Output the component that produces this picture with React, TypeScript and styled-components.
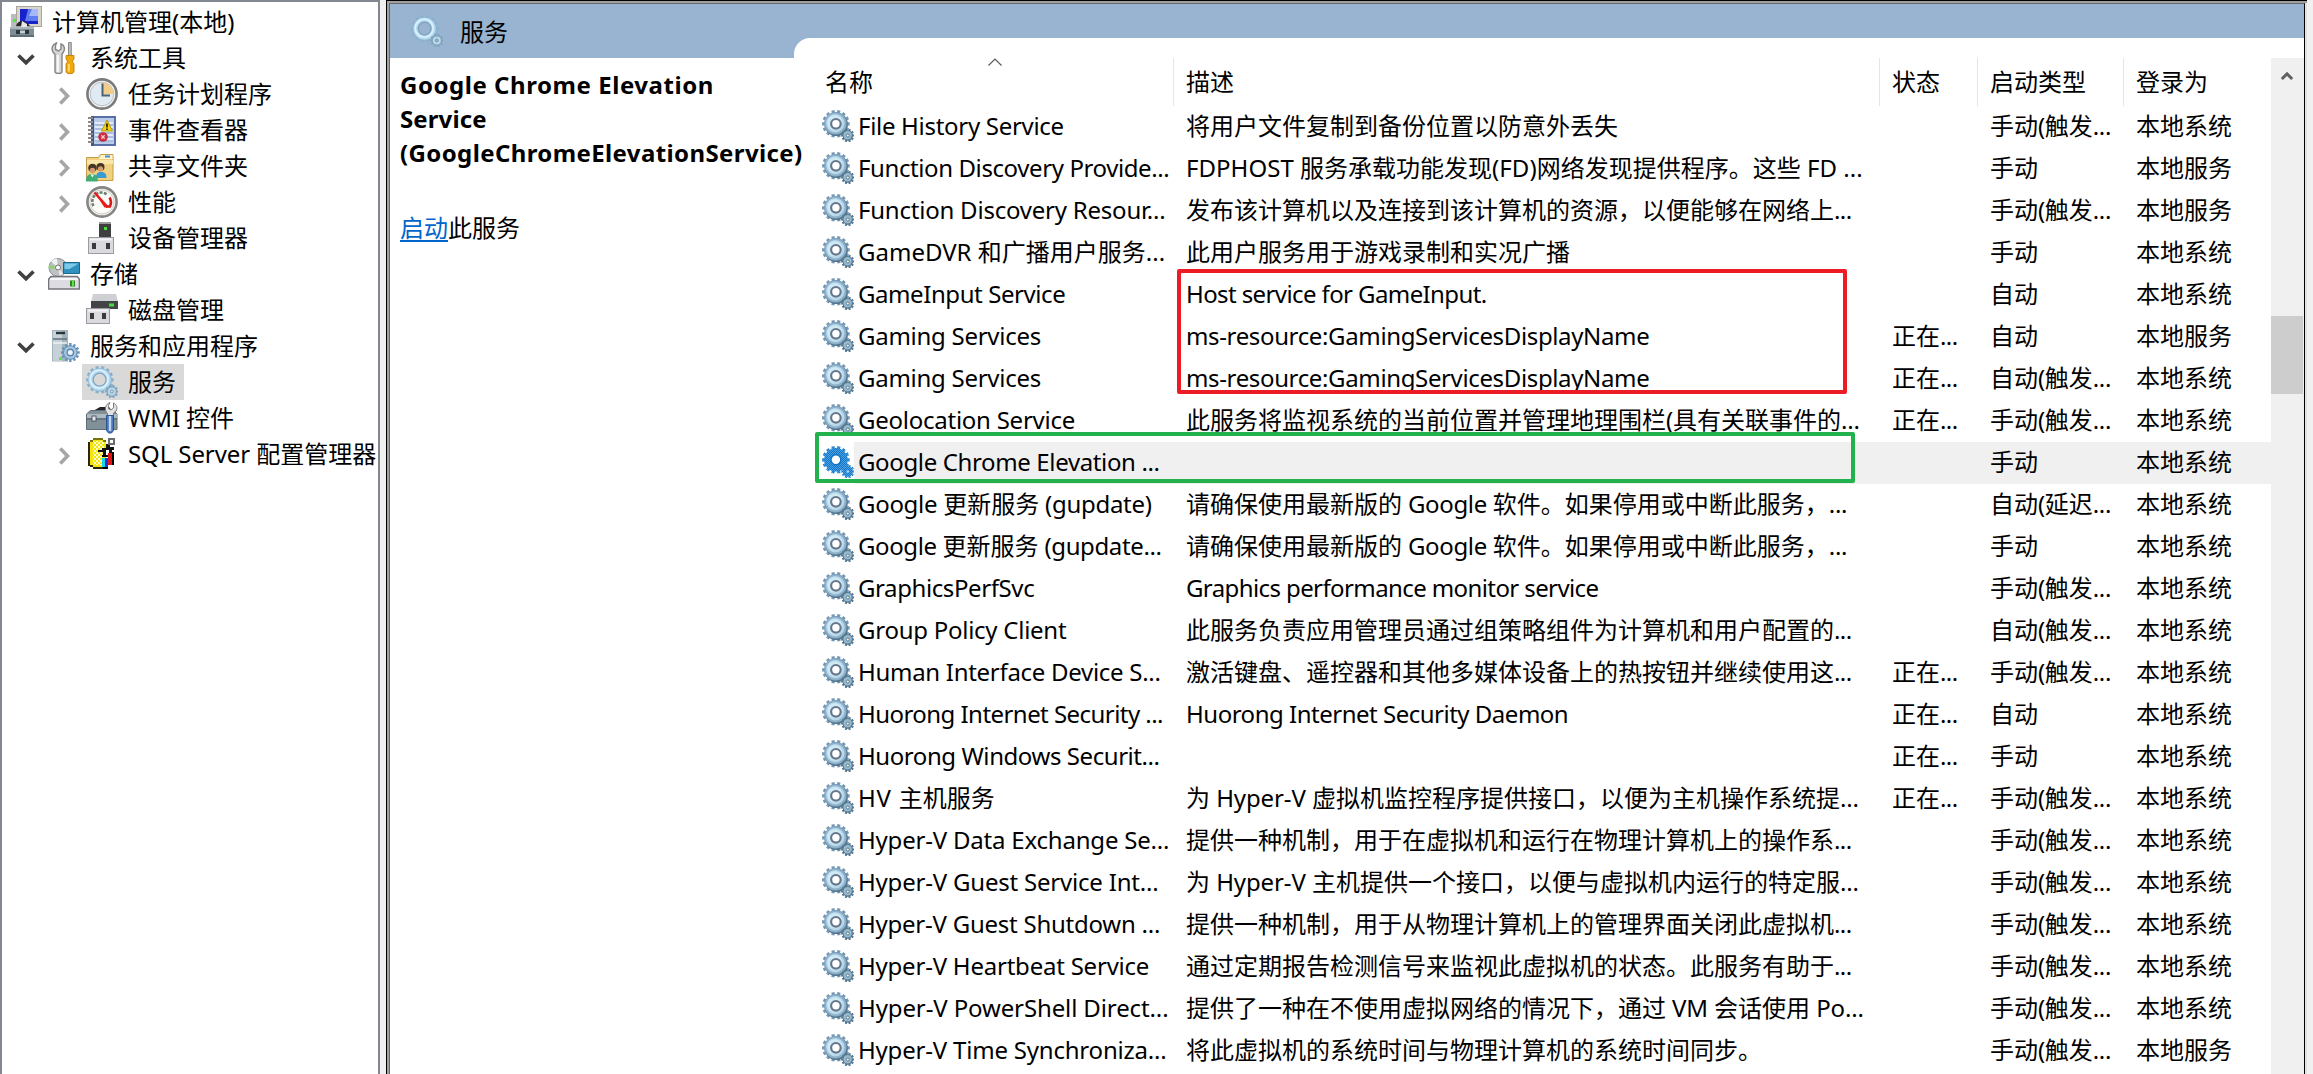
import React from "react";
import styled, { createGlobalStyle } from "styled-components";

const GlobalStyle = createGlobalStyle`
  * { box-sizing: border-box; }
  html, body { margin: 0; padding: 0; }
  body {
    width: 2313px;
    height: 1074px;
    overflow: hidden;
    background: #f0f0f0;
    color: #000;
    font-family: "Noto Sans", "Noto Sans CJK SC", sans-serif;
    font-size: 24px;
  }
`;

/* ---------- shared text ---------- */

const Latin = styled.span<{ $track: number }>`
  letter-spacing: ${(p) => p.$track}px;
`;

/** Tracks Latin runs separately so that Chinese glyphs keep their full-width pitch. */
function Label({ text, track = -0.6 }: { text: string; track?: number }) {
  const parts = text.split(/([\x20-\x7e]+)/).filter(Boolean);
  return (
    <>
      {parts.map((p, i) =>
        /^[\x20-\x7e]/.test(p) ? (
          <Latin key={i} $track={track}>
            {p}
          </Latin>
        ) : (
          <React.Fragment key={i}>{p}</React.Fragment>
        )
      )}
    </>
  );
}

/* ---------- icons ---------- */

const Glyph = styled.svg`
  display: block;
  width: 32px;
  height: 32px;
  flex: none;
`;

function gearPath(cx: number, cy: number, outer: number, inner: number, teeth: number) {
  const pts: string[] = [];
  const step = (Math.PI * 2) / teeth;
  for (let i = 0; i < teeth; i++) {
    const a = i * step;
    const spots: [number, number][] = [
      [a - step * 0.3, inner],
      [a - step * 0.26, outer],
      [a + step * 0.26, outer],
      [a + step * 0.3, inner],
    ];
    for (const [ang, r] of spots) {
      pts.push(`${(cx + Math.cos(ang) * r).toFixed(2)} ${(cy + Math.sin(ang) * r).toFixed(2)}`);
    }
  }
  return `M${pts.join("L")}Z`;
}

const BIG_GEAR = gearPath(13.9, 13.8, 13.9, 11.8, 14);
const SMALL_GEAR = gearPath(25.8, 25.5, 6.8, 5.2, 10);

function ListGear({ selected = false }: { selected?: boolean }) {
  if (selected) {
    return (
      <Glyph viewBox="0 0 32 32">
        <defs>
          <pattern id="dither" width="2" height="2" patternUnits="userSpaceOnUse">
            <rect width="2" height="2" fill="#1478cc" />
            <rect width="1" height="1" fill="#4a9edb" />
            <rect x="1" y="1" width="1" height="1" fill="#4a9edb" />
          </pattern>
        </defs>
        <path d={BIG_GEAR} fill="url(#dither)" />
        <path d={SMALL_GEAR} fill="url(#dither)" />
        <circle cx="13.9" cy="13.8" r="5" fill="none" stroke="#1173c6" strokeWidth="1.4" />
        <circle cx="13.9" cy="13.8" r="4.2" fill="#fff" />
        <circle cx="25.8" cy="25.5" r="1.2" fill="#b5d8f2" />
      </Glyph>
    );
  }
  return (
    <Glyph viewBox="0 0 32 32">
      <path d={BIG_GEAR} fill="#7698b4" />
      <circle cx="14.4" cy="14.6" r="11.4" fill="#55768f" />
      <circle cx="13.5" cy="13.4" r="11" fill="#8db1ca" />
      <circle cx="13.3" cy="13.2" r="9.2" fill="#b6d7e9" />
      <circle cx="12.9" cy="12.8" r="7.6" fill="#cfe9f5" />
      <circle cx="13.9" cy="13.8" r="4.8" fill="#fff" stroke="#65778e" strokeWidth="2.2" />
      <path d={SMALL_GEAR} fill="#54768f" />
      <circle cx="25.6" cy="25.3" r="4.2" fill="#98bace" />
      <circle cx="25.8" cy="25.5" r="1.5" fill="#eef6fa" stroke="#5d7b92" strokeWidth="1" />
    </Glyph>
  );
}

function PaleGear({ hole }: { hole: string }) {
  return (
    <Glyph viewBox="0 0 32 32">
      <path d={BIG_GEAR} fill="#8ab0cc" />
      <circle cx="13.6" cy="13.6" r="9" fill={hole} stroke="#b4daf0" strokeWidth="4.4" />
      <circle cx="13.2" cy="13.2" r="9" fill="none" stroke="#dcf2fc" strokeWidth="1.6" />
      <circle cx="13.6" cy="13.6" r="6.4" fill={hole} stroke="#7fa0ba" strokeWidth="1.200" />
      <path d={SMALL_GEAR} fill="#7fa3bd" />
      <circle cx="25.8" cy="25.5" r="4" fill="#bad8e8" />
      <circle cx="25.8" cy="25.5" r="1.5" fill={hole} stroke="#7595ad" strokeWidth="0.9" />
    </Glyph>
  );
}

const ComputerIcon = () => (
  <Glyph viewBox="0 0 32 32">
    <rect x="6.5" y="0.5" width="25" height="20" fill="#d8d6cc" stroke="#a8a69c" />
    <rect x="10" y="3" width="18" height="15" fill="#1722c8" />
    <path d="M18 3h10v12H15z" fill="#5f7cf0" />
    <path d="M22 3h6v7h-9z" fill="#a5b8fa" />
    <path d="M1 8h5v13H1z" fill="#b9bdbd" />
    <rect x="3" y="13" width="3" height="3" fill="#4cf02c" />
    <path d="M6 20c2-6 9-7 14 0z" fill="#23272b" />
    <path d="M12 15l5 3v3h-6z" fill="#e8e8e8" />
    <rect x="0" y="21" width="24" height="10" fill="#7f8d94" />
    <rect x="0" y="21" width="24" height="2" fill="#a9b7bd" />
    <rect x="6" y="24" width="4" height="4" fill="#2c363b" />
    <rect x="15" y="24" width="4" height="4" fill="#2c363b" />
    <rect x="10" y="25" width="5" height="2" fill="#c5d0d4" />
    <rect x="0" y="29" width="24" height="2" fill="#5f6e76" />
  </Glyph>
);

const ToolsIcon = () => (
  <Glyph viewBox="0 0 32 32">
    <path
      d="M8.500 1L7.500 3.500v4l3 1.500 2.500-2V2c3 1 4.500 4.500 2.500 8L14 12v18l-1.500 1.500h-4L7 30V12.500L5 10C3 6.500 4.500 2 8.500 1z"
      fill="#d6d6d6"
      stroke="#858585"
      strokeWidth="1.400"
    />
    <path d="M9.800 13v17" stroke="#fafafa" strokeWidth="2" />
    <path d="M20.500 0.500h2.800v13h-2.800z" fill="#bdbdbd" stroke="#808080" strokeWidth="0.900" />
    <path d="M18 13.500h8v3l-1.500 3L26 22v8l-1.500 1.500h-5L18 30v-8l1.500-2.500L18 16.500z" fill="#f0a90c" stroke="#c07f08" strokeWidth="0.900" />
    <path d="M20.800 22v7.500" stroke="#ffd968" strokeWidth="2" />
  </Glyph>
);

const ClockIcon = () => (
  <Glyph viewBox="0 0 32 32">
    <circle cx="16" cy="16" r="14.600" fill="#f4f4f4" stroke="#7b7b7b" strokeWidth="2.600" />
    <circle cx="16" cy="16" r="11.800" fill="#dfeaf3" stroke="#b9bfc4" strokeWidth="1" />
    <path d="M16 16V4.500A11.500 11.500 0 0 1 27.500 16z" fill="#f2cd8a" />
    <path d="M16.500 5.500V17.500h7.500" fill="none" stroke="#4d6175" strokeWidth="2" />
  </Glyph>
);

const EventIcon = () => (
  <Glyph viewBox="0 0 32 32">
    <rect x="5" y="2" width="25" height="30" fill="#5a6fa8" />
    <rect x="8" y="4" width="20" height="26" fill="#b9cbea" />
    <path d="M9 9h18M9 13h18M9 17h18M9 21h18M9 25h18" stroke="#f2f6fc" strokeWidth="1.400" />
    <path d="M9 11h18M9 15h18M9 19h18M9 23h18M9 27h18" stroke="#8ea5cf" strokeWidth="0.700" />
    <rect x="5" y="2" width="3" height="30" fill="#4c5578" />
    <path d="M2 4h5M2 8h5M2 12h5M2 16h5M2 20h5M2 24h5M2 28h5" stroke="#8a8a8a" strokeWidth="2" />
    <path d="M21 6l5.500 11h-11z" fill="#f2d313" stroke="#b99b0c" strokeWidth="1" />
    <path d="M21 9.500v4M21 14.500v1.500" stroke="#2d2a10" strokeWidth="1.800" />
    <circle cx="17" cy="23" r="4.800" fill="#c92f3f" />
    <path d="M15.300 21.300l3.400 3.400M18.700 21.300l-3.400 3.400" stroke="#f6c7ca" strokeWidth="1.300" />
  </Glyph>
);

const SharedIcon = () => (
  <Glyph viewBox="0 0 32 32">
    <path d="M0.500 7.500h12l2-3h12.500v26H0.500z" fill="#f0d180" stroke="#c49c48" strokeWidth="1" />
    <path d="M15 5h11.500v4H13z" fill="#fff4cd" />
    <path d="M19 5.500h5v2h-5z" fill="#3d93d8" />
    <path d="M1 10h26v4H1z" fill="#fae6a8" />
    <circle cx="14.500" cy="17" r="4" fill="#43352a" />
    <circle cx="14.500" cy="19" r="2.700" fill="#d39c6c" />
    <path d="M10 28c0-4.500 1.500-6 5-6s5.500 1.500 5.500 6z" fill="#3a9ad2" />
    <circle cx="6.500" cy="18" r="4.300" fill="#43352a" />
    <circle cx="6.500" cy="20.500" r="2.800" fill="#d39c6c" />
    <path d="M0 31.500C0 26 2 24 6 24s5.800 2 5.800 7.500z" fill="#3fae74" />
    <path d="M4.500 24.500l1.800 3 1.700-3z" fill="#fff" />
  </Glyph>
);

const PerfIcon = () => (
  <Glyph viewBox="0 0 32 32">
    <circle cx="16" cy="16" r="14.600" fill="#f4f1ea" stroke="#858585" strokeWidth="2.600" />
    <circle cx="16" cy="16" r="12" fill="#fdfcf8" stroke="#d3cfc4" strokeWidth="1" />
    <path d="M7.500 20a9 9 0 0 1 14-11" fill="none" stroke="#6d8272" strokeWidth="2.600" strokeDasharray="3 1.200" />
    <path d="M23.500 11.500c2 3 1.500 6.500 0.500 9h-4" fill="none" stroke="#d91a1a" strokeWidth="2.600" />
    <path d="M8.500 6.500l13.500 15-3.500 0z" fill="#e81c1c" />
    <path d="M8.500 6.500l13 14.500" stroke="#e81c1c" strokeWidth="2.600" />
  </Glyph>
);

const DeviceIcon = () => (
  <Glyph viewBox="0 0 32 32">
    <rect x="13" y="0" width="12" height="16" fill="#3f3f3f" />
    <rect x="13" y="0" width="12" height="2" fill="#9a9a9a" />
    <rect x="18" y="5" width="3" height="3" fill="#43e03c" />
    <rect x="2.500" y="15.500" width="25" height="16" fill="#d9d9de" stroke="#9b9ba1" />
    <rect x="4" y="16.500" width="22" height="2" fill="#f3f3f5" />
    <rect x="6" y="21" width="4" height="6" fill="#3a3a3a" />
    <rect x="20" y="21" width="4" height="6" fill="#3a3a3a" />
  </Glyph>
);

const StorageIcon = () => (
  <Glyph viewBox="0 0 32 32">
    <circle cx="10" cy="9.500" r="9" fill="#bfc2c4" stroke="#8a8d8f" />
    <path d="M10 9.500L3 3.500a9 9 0 0 1 6-3z" fill="#f1f3f3" />
    <path d="M10 9.500L11.500 18a9 9 0 0 0 4-2z" fill="#e6e8e8" />
    <path d="M10 9.500L1 11.500a9 9 0 0 1 0.300-5z" fill="#93cf76" />
    <circle cx="10" cy="9.500" r="2.500" fill="#fff" stroke="#6f7274" />
    <path d="M15.500 4.500h16v11h-16z" fill="#3290be" stroke="#1d668e" />
    <path d="M16.500 5.500h14l-9 5.500h-5z" fill="#7ccbe9" />
    <path d="M3 18.500h26l2.500 3v9.500H0.500v-9.500z" fill="#dcdce2" stroke="#74747b" strokeWidth="1.600" />
    <path d="M2 21h28" stroke="#fff" strokeWidth="1.500" />
    <rect x="22" y="22.500" width="5" height="6" fill="#3a7e31" />
    <rect x="24" y="22.500" width="2" height="6" fill="#58ea3b" />
  </Glyph>
);

const DiskIcon = () => (
  <Glyph viewBox="0 0 32 32">
    <path d="M7 0h23l2 8H5z" fill="#cfd0d4" />
    <rect x="5" y="7" width="27" height="8" fill="#424446" />
    <rect x="23" y="9.500" width="5" height="3" fill="#43e03c" />
    <rect x="0.500" y="14.500" width="23" height="15" fill="#d9d9de" stroke="#9b9ba1" />
    <rect x="2" y="15.500" width="20" height="2" fill="#f3f3f5" />
    <rect x="4" y="19" width="4" height="6" fill="#3a3a3a" />
    <rect x="16" y="19" width="4" height="6" fill="#3a3a3a" />
  </Glyph>
);

const SERVER_GEAR = gearPath(22.3, 22.5, 9.5, 7.3, 12);
const ServerIcon = () => (
  <Glyph viewBox="0 0 32 32">
    <path d="M4 0h16v31.500H4z" fill="#a3b4bd" />
    <path d="M5 1h9v30H5z" fill="#c6d2d8" />
    <path d="M8 3h9" stroke="#27333b" strokeWidth="2.400" />
    <path d="M5 9h14" stroke="#5f717c" strokeWidth="1.500" />
    <path d="M5 13h14" stroke="#eef3f5" strokeWidth="1.500" />
    <path d={SERVER_GEAR} fill="#6a93b8" />
    <circle cx="22.3" cy="22.5" r="6.200" fill="#a6c8e2" />
    <circle cx="22.3" cy="22.5" r="3.200" fill="#eef6fb" stroke="#5f87ab" strokeWidth="1.400" />
    <rect x="11" y="27" width="3" height="3" fill="#5fe05c" />
  </Glyph>
);

const WmiIcon = () => (
  <Glyph viewBox="0 0 32 32">
    <path d="M7 9l7-4h9l4 5z" fill="#23272a" />
    <path d="M0.500 12l4-3.500h23L31 12v15.500H0.500z" fill="#82909a" stroke="#5f6d76" />
    <path d="M1 12h30v4H1z" fill="#adbac1" />
    <path d="M1 17h30" stroke="#4f5c64" strokeWidth="1" />
    <rect x="6" y="14" width="4" height="5" fill="#e3e6e8" stroke="#3c464c" strokeWidth="0.800" />
    <path d="M24 0.500l-1.500 3v3l2.500 1.500L27.500 6V1C30.500 2.500 32 6 30 9l-2.500 2v3.500h-6V11.500C18 8.500 19 2 24 0.500z" fill="#e3e3e3" stroke="#7c7c7c" />
    <path d="M20.500 13.500h7v15l-2 2.500h-3l-2-2.500z" fill="#4b79bd" stroke="#2f5494" />
    <path d="M24 14v15" stroke="#c2d8f2" strokeWidth="2.400" />
  </Glyph>
);

const SqlIcon = () => (
  <Glyph viewBox="0 0 32 32" shapeRendering="crispEdges">
    <defs>
      <pattern id="gold" width="4" height="4" patternUnits="userSpaceOnUse">
        <rect width="4" height="4" fill="#f4e60c" />
        <rect width="2" height="2" fill="#fffbd0" />
        <rect x="2" y="2" width="2" height="2" fill="#fffbd0" />
      </pattern>
    </defs>
    <path d="M4 3h3V1h10v2h3v26h-3v2H7v-2H4z" fill="#f4e60c" />
    <path d="M7 3h11v24H7z" fill="url(#gold)" />
    <path d="M3 4v24M4 28h3M7 30h10" stroke="#2a2804" strokeWidth="2" />
    <path d="M4 3h3M7 1h10M17 3h3" stroke="#77720c" strokeWidth="2" />
    <path d="M12 12h4v-2h4V6h4v3h4v3h-2v3h-3v-3h-3v6h-3v-4h-5z" fill="#111" />
    <path d="M23 1h5v5h-5z" fill="#fff" stroke="#6b6b6b" strokeWidth="1.500" />
    <rect x="16" y="20" width="3" height="9" fill="#12d6ee" />
    <rect x="19" y="20" width="3" height="9" fill="#1a32d6" />
    <rect x="22" y="15" width="4" height="12" fill="#e01616" />
    <path d="M16 18h6M17 30h5M27 14v13" stroke="#000" strokeWidth="2" />
  </Glyph>
);

const Chevron = ({ open }: { open: boolean }) => (
  <svg width="24" height="24" viewBox="0 0 24 24">
    {open ? (
      <path d="M4.500 9.500l7.500 7.200 7.500-7.200" fill="none" stroke="#404040" strokeWidth="3.600" />
    ) : (
      <path d="M8.300 6.500l7.200 7.500-7.200 7.500" fill="none" stroke="#a6a6a6" strokeWidth="3.600" />
    )}
  </svg>
);

/* ---------- frame ---------- */

const Window = styled.div`
  display: flex;
  width: 2313px;
  height: 1074px;
  overflow: hidden;
  background: #f0f0f0;
`;

const TreePanel = styled.nav`
  width: 380px;
  flex: none;
  padding-top: 2px;
  border: solid #828790;
  border-width: 2px 2px 0 2px;
  background: #fff;
`;

const TreeRow = styled.div<{ $level: number }>`
  display: flex;
  align-items: center;
  height: 36px;
  padding-left: ${(p) => (p.$level === 0 ? 4 : p.$level * 38 - 26)}px;
`;

const Expander = styled.span`
  display: flex;
  width: 24px;
  height: 24px;
  margin-right: 6px;
  flex: none;
`;

const TreeItem = styled.span<{ $active?: boolean }>`
  display: flex;
  align-items: center;
  height: 36px;
  padding: 0 8px 0 4px;
  background: ${(p) => (p.$active ? "#d9d9d9" : "transparent")};
`;

const TreeText = styled.span`
  margin-left: 10px;
  line-height: 36px;
  height: 36px;
  white-space: nowrap;
`;

const Frame = styled.main`
  display: flex;
  margin-left: 6px;
  width: 1921px;
  flex: none;
  border: solid #000;
  border-width: 1px 0 0 1px;
`;

const FrameShade = styled.div`
  display: flex;
  width: 1920px;
  border: solid #a0a0a0;
  border-width: 2px 0 0 2px;
`;

const FrameInner = styled.div`
  display: flex;
  flex-direction: column;
  width: 1916px;
  border: solid #696969;
  border-width: 1px 0 0 1px;
  border-right: 1px solid #000;
  background: #fff;
`;

const FrameLight = styled.div`
  width: 2px;
  background: #e3e3e3;
`;

/* ---------- banner ---------- */

const Banner = styled.header`
  display: flex;
  height: 54px;
  flex: none;
  background: #99b4d1;
`;

const BannerTitle = styled.div`
  display: flex;
  align-items: center;
  width: 404px;
  padding: 0 0 0 21px;
  gap: 17px;
`;

const BannerText = styled.span`
  line-height: 36px;
  height: 34px;
`;

const Tab = styled.div`
  flex: 1;
  align-self: flex-end;
  height: 20px;
  background: #fff;
  border-top-left-radius: 16px;
`;

const Body = styled.div`
  display: flex;
  flex: 1;
  min-height: 0;
`;

/* ---------- detail pane ---------- */

const Detail = styled.section`
  width: 404px;
  flex: none;
  padding: 10px 0 0 10px;
`;

const ServiceTitle = styled.h1`
  margin: 0;
  font-size: 24px;
  line-height: 34px;
  font-weight: 700;
  white-space: nowrap;
`;

const Action = styled.p`
  margin: 41px 0 0;
  line-height: 34px;
`;

const ActionLink = styled.a`
  color: #0066cc;
  text-decoration: underline;
  text-decoration-thickness: 2px;
  text-underline-offset: 3px;
`;

/* ---------- list ---------- */

const List = styled.section`
  position: relative;
  width: 1477px;
  flex: none;
`;

const HeadRow = styled.div`
  display: grid;
  grid-template-columns: 379px 706px 98px 146px 148px;
  height: 48px;
`;

const HeadCell = styled.div<{ $first?: boolean; $last?: boolean }>`
  position: relative;
  padding-left: ${(p) => (p.$first ? 31 : 13)}px;
  line-height: 48px;
  border-right: ${(p) => (p.$last ? 0 : 1)}px solid #e5e5e5;
  margin-right: ${(p) => (p.$last ? 0 : -1)}px;
`;

const SortMark = styled.svg`
  position: absolute;
  left: 194px;
  top: 0;
`;

const Row = styled.div`
  display: grid;
  grid-template-columns: 60px 319px 706px 98px 146px 148px;
  height: 42px;
`;

const IconCell = styled.div`
  padding: 4px 0 0 28px;
`;

const Cell = styled.div<{ $selected?: boolean; $name?: boolean }>`
  padding-left: ${(p) => (p.$name ? 4 : 13)}px;
  line-height: 39px;
  white-space: nowrap;
  background: ${(p) => (p.$selected ? "#f0f0f0" : "transparent")};
`;

const Highlight = styled.div<{ $x: number; $y: number; $w: number; $h: number; $color: string }>`
  position: absolute;
  left: ${(p) => p.$x}px;
  top: ${(p) => p.$y}px;
  width: ${(p) => p.$w}px;
  height: ${(p) => p.$h}px;
  border: 4px solid ${(p) => p.$color};
  border-radius: 2px;
`;

/* ---------- scrollbar ---------- */

const Scrollbar = styled.div`
  display: flex;
  flex-direction: column;
  width: 33px;
  background: #f0f0f0;
`;

const ScrollArrow = styled.div`
  display: flex;
  justify-content: center;
  align-items: center;
  height: 36px;
  padding-right: 2px;
`;

const ScrollThumb = styled.div`
  width: 32px;
  height: 78px;
  margin-top: 222px;
  background: #cdcdcd;
`;

/* ---------- data ---------- */

type Node = { text: string; level: number; open?: boolean; icon: React.ReactNode; active?: boolean; track?: number };

const TREE: Node[] = [
  { text: "计算机管理(本地)", level: 0, icon: <ComputerIcon />, track: 0 },
  { text: "系统工具", level: 1, open: true, icon: <ToolsIcon /> },
  { text: "任务计划程序", level: 2, open: false, icon: <ClockIcon /> },
  { text: "事件查看器", level: 2, open: false, icon: <EventIcon /> },
  { text: "共享文件夹", level: 2, open: false, icon: <SharedIcon /> },
  { text: "性能", level: 2, open: false, icon: <PerfIcon /> },
  { text: "设备管理器", level: 2, icon: <DeviceIcon /> },
  { text: "存储", level: 1, open: true, icon: <StorageIcon /> },
  { text: "磁盘管理", level: 2, icon: <DiskIcon /> },
  { text: "服务和应用程序", level: 1, open: true, icon: <ServerIcon /> },
  { text: "服务", level: 2, icon: <PaleGear hole="#d9d9d9" />, active: true },
  { text: "WMI 控件", level: 2, icon: <WmiIcon />, track: -0.1 },
  { text: "SQL Server 配置管理器", level: 2, open: false, icon: <SqlIcon />, track: -0.1 },
];

const AT = "自动(触发...";
const MT = "手动(触发...";
const SYS = "本地系统";
const LOC = "本地服务";
const RUN = "正在...";

type Service = {
  name: string;
  nameTrack: number;
  desc?: string;
  descTrack?: number;
  status?: string;
  start: string;
  logon: string;
};

const SERVICES: Service[] = [
  { name: "File History Service", nameTrack: -0.3, desc: "将用户文件复制到备份位置以防意外丢失", start: MT, logon: SYS },
  { name: "Function Discovery Provide...", nameTrack: -0.4, desc: "FDPHOST 服务承载功能发现(FD)网络发现提供程序。这些 FD ...", descTrack: 0.04, start: "手动", logon: LOC },
  { name: "Function Discovery Resour...", nameTrack: -0.22, desc: "发布该计算机以及连接到该计算机的资源，以便能够在网络上...", start: MT, logon: LOC },
  { name: "GameDVR 和广播用户服务...", nameTrack: 0, desc: "此用户服务用于游戏录制和实况广播", start: "手动", logon: SYS },
  { name: "GameInput Service", nameTrack: -0.42, desc: "Host service for GameInput.", start: "自动", logon: SYS },
  { name: "Gaming Services", nameTrack: -0.27, desc: "ms-resource:GamingServicesDisplayName", descTrack: -0.36, status: RUN, start: "自动", logon: LOC },
  { name: "Gaming Services", nameTrack: -0.27, desc: "ms-resource:GamingServicesDisplayName", descTrack: -0.36, status: RUN, start: AT, logon: SYS },
  { name: "Geolocation Service", nameTrack: -0.25, desc: "此服务将监视系统的当前位置并管理地理围栏(具有关联事件的...", descTrack: -0.2, status: RUN, start: MT, logon: SYS },
  { name: "Google Chrome Elevation ...", nameTrack: -0.36, start: "手动", logon: SYS },
  { name: "Google 更新服务 (gupdate)", nameTrack: -0.3, desc: "请确保使用最新版的 Google 软件。如果停用或中断此服务，...", descTrack: -0.33, start: "自动(延迟...", logon: SYS },
  { name: "Google 更新服务 (gupdate...", nameTrack: -0.38, desc: "请确保使用最新版的 Google 软件。如果停用或中断此服务，...", descTrack: -0.33, start: "手动", logon: SYS },
  { name: "GraphicsPerfSvc", nameTrack: -0.4, desc: "Graphics performance monitor service", start: MT, logon: SYS },
  { name: "Group Policy Client", nameTrack: -0.26, desc: "此服务负责应用管理员通过组策略组件为计算机和用户配置的...", start: AT, logon: SYS },
  { name: "Human Interface Device S...", nameTrack: -0.29, desc: "激活键盘、遥控器和其他多媒体设备上的热按钮并继续使用这...", status: RUN, start: MT, logon: SYS },
  { name: "Huorong Internet Security ...", nameTrack: -0.55, desc: "Huorong Internet Security Daemon", descTrack: -0.49, status: RUN, start: "自动", logon: SYS },
  { name: "Huorong Windows Securit...", nameTrack: -0.43, status: RUN, start: "手动", logon: SYS },
  { name: "HV 主机服务", nameTrack: 0.8, desc: "为 Hyper-V 虚拟机监控程序提供接口，以便为主机操作系统提...", descTrack: -0.1, status: RUN, start: MT, logon: SYS },
  { name: "Hyper-V Data Exchange Se...", nameTrack: -0.2, desc: "提供一种机制，用于在虚拟机和运行在物理计算机上的操作系...", start: MT, logon: SYS },
  { name: "Hyper-V Guest Service Int...", nameTrack: -0.2, desc: "为 Hyper-V 主机提供一个接口，以便与虚拟机内运行的特定服...", descTrack: -0.1, start: MT, logon: SYS },
  { name: "Hyper-V Guest Shutdown ...", nameTrack: -0.24, desc: "提供一种机制，用于从物理计算机上的管理界面关闭此虚拟机...", start: MT, logon: SYS },
  { name: "Hyper-V Heartbeat Service", nameTrack: -0.22, desc: "通过定期报告检测信号来监视此虚拟机的状态。此服务有助于...", start: MT, logon: SYS },
  { name: "Hyper-V PowerShell Direct...", nameTrack: -0.12, desc: "提供了一种在不使用虚拟网络的情况下，通过 VM 会话使用 Po...", descTrack: -0.15, start: MT, logon: SYS },
  { name: "Hyper-V Time Synchroniza...", nameTrack: -0.2, desc: "将此虚拟机的系统时间与物理计算机的系统时间同步。", start: MT, logon: LOC },
];

const SELECTED = 8;

export default function App() {
  return (
    <>
      <GlobalStyle />
      <Window>
        <TreePanel>
          {TREE.map((n) => (
            <TreeRow key={n.text} $level={n.level}>
              {n.level > 0 && <Expander>{n.open !== undefined && <Chevron open={n.open} />}</Expander>}
              <TreeItem $active={n.active}>
                {n.icon}
                <TreeText>
                  <Label text={n.text} track={n.track} />
                </TreeText>
              </TreeItem>
            </TreeRow>
          ))}
        </TreePanel>

        <Frame>
          <FrameShade>
            <FrameInner>
              <Banner>
                <BannerTitle>
                  <PaleGear hole="#99b4d1" />
                  <BannerText>服务</BannerText>
                </BannerTitle>
                <Tab />
              </Banner>
              <Body>
                <Detail>
                  <ServiceTitle>
                    <Label text="Google Chrome Elevation" track={0.55} />
                    <br />
                    <Label text="Service" track={0.1} />
                    <br />
                    <Label text="(GoogleChromeElevationService)" track={0.39} />
                  </ServiceTitle>
                  <Action>
                    <ActionLink>启动</ActionLink>此服务
                  </Action>
                </Detail>

                <List>
                  <HeadRow>
                    <HeadCell $first>
                      名称
                      <SortMark width="14" height="9" viewBox="0 0 14 9">
                        <path d="M0.500 7.500L7 1l6.500 6.500" fill="none" stroke="#5a5a5a" strokeWidth="1.200" />
                      </SortMark>
                    </HeadCell>
                    <HeadCell>描述</HeadCell>
                    <HeadCell>状态</HeadCell>
                    <HeadCell>启动类型</HeadCell>
                    <HeadCell $last>登录为</HeadCell>
                  </HeadRow>
                  {SERVICES.map((s, i) => {
                    const on = i === SELECTED;
                    return (
                      <Row key={i}>
                        <IconCell>
                          <ListGear selected={on} />
                        </IconCell>
                        <Cell $name $selected={on}>
                          <Label text={s.name} track={s.nameTrack} />
                        </Cell>
                        <Cell $selected={on}>
                          <Label text={s.desc ?? ""} track={s.descTrack} />
                        </Cell>
                        <Cell $selected={on}>
                          <Label text={s.status ?? ""} />
                        </Cell>
                        <Cell $selected={on}>
                          <Label text={s.start} track={-0.4} />
                        </Cell>
                        <Cell $selected={on}>{s.logon}</Cell>
                      </Row>
                    );
                  })}
                  <Highlight $x={383} $y={211} $w={670} $h={125} $color="#ed1c24" />
                  <Highlight $x={21} $y={374} $w={1040} $h={51} $color="#22b14c" />
                </List>

                <Scrollbar>
                  <ScrollArrow>
                    <svg width="12" height="10" viewBox="0 0 12 10">
                      <path d="M0.800 8L6 2.800 11.200 8" fill="none" stroke="#606060" strokeWidth="3" />
                    </svg>
                  </ScrollArrow>
                  <ScrollThumb />
                </Scrollbar>
              </Body>
            </FrameInner>
            <FrameLight />
          </FrameShade>
        </Frame>
      </Window>
    </>
  );
}
